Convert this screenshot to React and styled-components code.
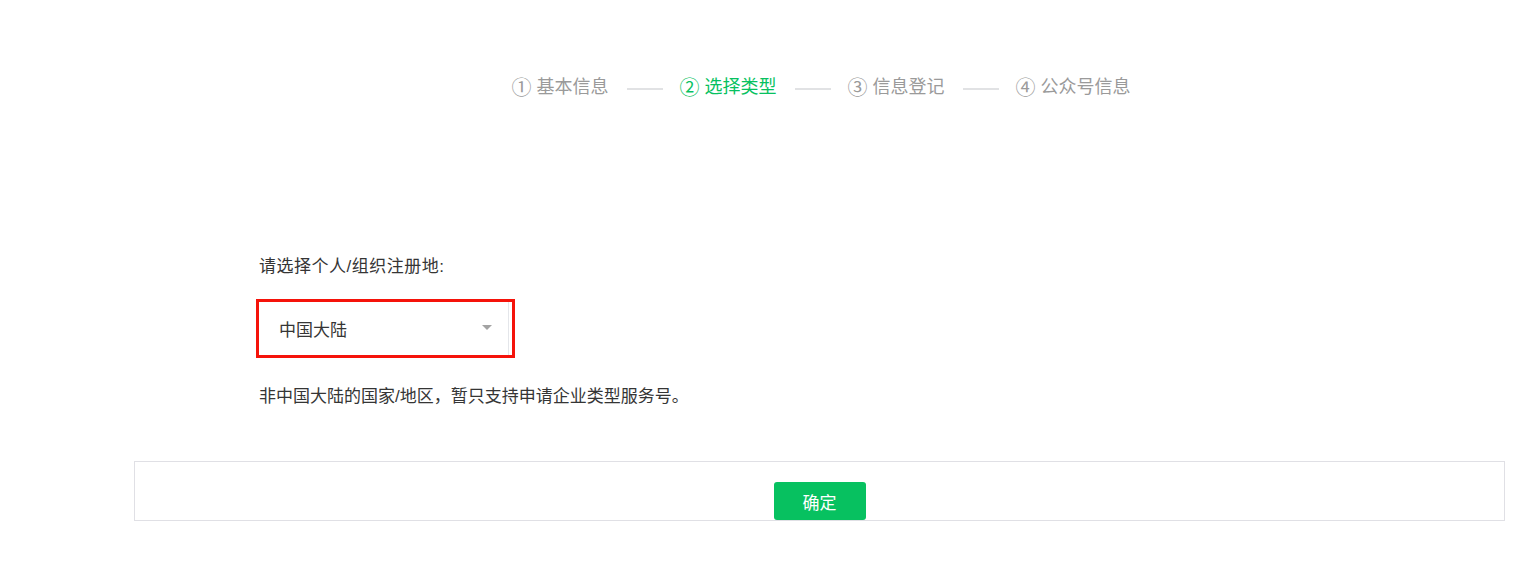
import React from "react";
import styled, { createGlobalStyle } from "styled-components";

const GlobalStyle = createGlobalStyle`
  html, body {
    margin: 0;
    padding: 0;
    background: #fff;
  }
  body {
    font-family: "Liberation Sans", "Noto Sans CJK SC", sans-serif;
    color: #353535;
  }
`;

const Page = styled.div`
  width: 1371px;
  margin-left: 134px;
  padding-top: 69px;
`;

const Stepper = styled.ul`
  list-style: none;
  margin: 0;
  padding: 0 0 0 4px;
  display: flex;
  justify-content: center;
  align-items: center;
  height: 36px;
  gap: 18px;
`;

const Step = styled.li`
  display: flex;
  align-items: center;
  gap: 6px;
  font-size: 18px;
  line-height: 36px;
  color: ${(p) => (p.$active ? "#07c160" : "#9a9a9a")};
`;

const StepNum = styled.span`
  font-family: "Noto Sans CJK SC", sans-serif;
  font-size: 20px;
  width: 18px;
  display: inline-flex;
  justify-content: center;
`;

const Connector = styled.li`
  width: 36px;
  height: 2px;
  margin-top: 3px;
  background: #e1e2e4;
`;

const Form = styled.div`
  padding-left: 125px;
  margin-top: 150px;
`;

const Label = styled.div`
  font-size: 17px;
  line-height: 24px;
  letter-spacing: 0.5px;
`;

const Highlight = styled.div`
  display: inline-block;
  margin-top: 20px;
  margin-left: -3px;
  border: 3px solid #f5130a;
  padding-right: 3px;
`;

const Select = styled.div`
  width: 250px;
  height: 53px;
  box-sizing: border-box;
  border-right: 1px solid #e4e6ea;
  display: flex;
  align-items: center;
  justify-content: space-between;
  padding: 0 16px 0 20px;
  font-size: 17px;
  color: #353535;
`;

const Caret = styled.span`
  width: 0;
  height: 0;
  border-left: 5px solid transparent;
  border-right: 5px solid transparent;
  border-top: 5px solid #a3a3a3;
  margin-top: -2px;
`;

const Note = styled.p`
  margin: 27px 0 0;
  font-size: 17px;
  line-height: 24px;
`;

const Footer = styled.div`
  margin-top: 52px;
  height: 60px;
  box-sizing: border-box;
  border: 1px solid #e0e0e5;
  padding-top: 20px;
  display: flex;
  justify-content: center;
`;

const Button = styled.button`
  width: 92px;
  height: 38px;
  border: 0;
  border-radius: 3px;
  background: #07c160;
  color: #fff;
  font-family: inherit;
  font-size: 17px;
  cursor: pointer;
  position: relative;
  z-index: 1;
`;

const steps = [
  { num: "①", label: "基本信息" },
  { num: "②", label: "选择类型", active: true },
  { num: "③", label: "信息登记" },
  { num: "④", label: "公众号信息" },
];

export default function App() {
  return (
    <>
      <GlobalStyle />
      <Page>
        <Stepper>
          {steps.map((s, i) => (
            <React.Fragment key={s.label}>
              {i > 0 && <Connector />}
              <Step $active={s.active}>
                <StepNum>{s.num}</StepNum>
                {s.label}
              </Step>
            </React.Fragment>
          ))}
        </Stepper>
        <Form>
          <Label>请选择个人/组织注册地:</Label>
          <Highlight>
            <Select>
              中国大陆
              <Caret />
            </Select>
          </Highlight>
          <Note>非中国大陆的国家/地区，暂只支持申请企业类型服务号。</Note>
        </Form>
        <Footer>
          <Button>确定</Button>
        </Footer>
      </Page>
    </>
  );
}
